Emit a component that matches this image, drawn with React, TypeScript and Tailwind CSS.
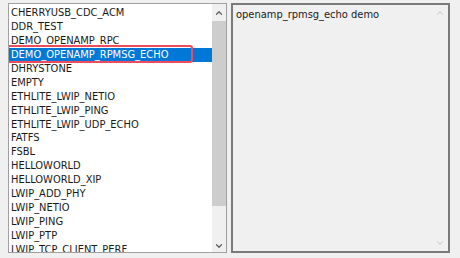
import { ChevronUp, ChevronDown } from 'lucide-react'

const items = [
  'CHERRYUSB_CDC_ACM',
  'DDR_TEST',
  'DEMO_OPENAMP_RPC',
  'DEMO_OPENAMP_RPMSG_ECHO',
  'DHRYSTONE',
  'EMPTY',
  'ETHLITE_LWIP_NETIO',
  'ETHLITE_LWIP_PING',
  'ETHLITE_LWIP_UDP_ECHO',
  'FATFS',
  'FSBL',
  'HELLOWORLD',
  'HELLOWORLD_XIP',
  'LWIP_ADD_PHY',
  'LWIP_NETIO',
  'LWIP_PING',
  'LWIP_PTP',
  'LWIP_TCP_CLIENT_PERF',
]

const selected = 3

export default function App() {
  return (
    <div
      className="flex h-[258px] w-[460px] gap-[4px] bg-[#f0f0f0] pl-[8px] pt-[3px] text-[11px] text-[#1a1a1a]"
      style={{ fontFamily: '"DejaVu Sans Condensed", "Liberation Sans", sans-serif' }}
    >
      {/* template list */}
      <div className="flex h-[250px] w-[219px] border border-[#a0a0a0] bg-white">
        <div className="relative flex-1 overflow-hidden pt-[2px]">
          {items.map((name, i) => (
            <div
              key={name}
              className={`flex h-[13.9px] items-center whitespace-nowrap pl-[2px] leading-none ${
                i === selected ? 'bg-[#0078d7] text-white' : ''
              }`}
            >
              {name}
            </div>
          ))}
          <div className="absolute left-[-2px] top-[41px] h-[18px] w-[186px] rounded-[3px] border-2 border-[#ef4b5c]" />
        </div>
        <div className="flex w-[14px] flex-col items-center bg-[#f0f0f0]">
          <div className="flex h-[17px] items-center justify-center">
            <ChevronUp className="h-[10px] w-[10px] text-[#606060]" strokeWidth={3} />
          </div>
          <div className="h-[185px] w-full bg-[#cdcdcd]" />
          <div className="flex flex-1 items-end justify-center pb-[1px]">
            <ChevronDown className="h-[10px] w-[10px] text-[#606060]" strokeWidth={3} />
          </div>
        </div>
      </div>

      {/* description */}
      <div className="flex h-[250px] w-[219px] border-2 border-[#7a7a7a] bg-[#f0f0f0]">
        <div className="flex-1 pl-[3px] pt-[3px] leading-[14px]">openamp_rpmsg_echo demo</div>
        <div className="flex w-[16px] flex-col items-center justify-between py-[3px]">
          <ChevronUp className="h-[10px] w-[10px] text-[#c8c8c8]" strokeWidth={2.5} />
          <ChevronDown className="h-[10px] w-[10px] text-[#c8c8c8]" strokeWidth={2.5} />
        </div>
      </div>
    </div>
  )
}
